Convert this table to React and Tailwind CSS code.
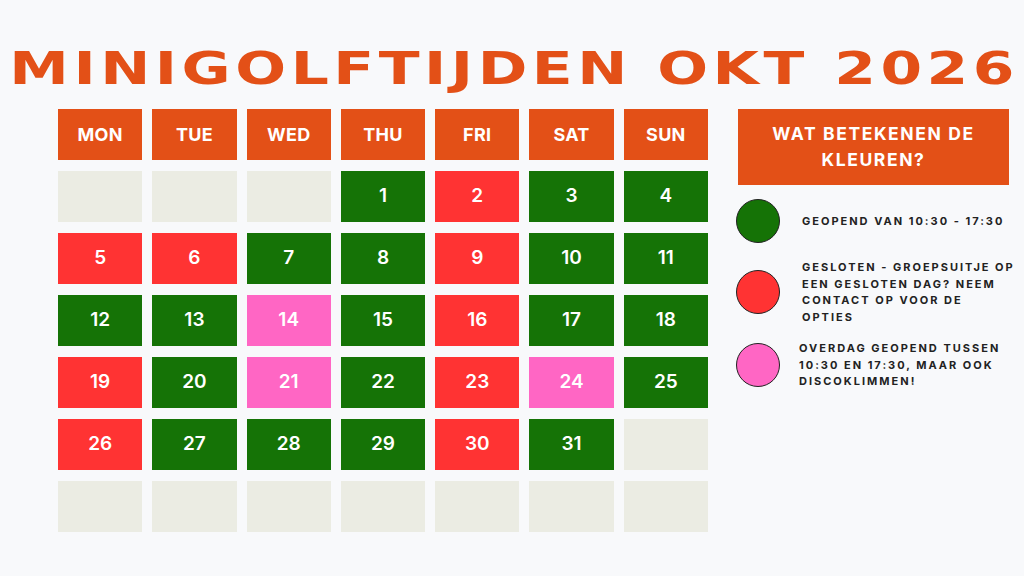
const days = ['MON', 'TUE', 'WED', 'THU', 'FRI', 'SAT', 'SUN']

// g = open, r = closed, p = disco
const cells = [
  null, null, null, [1, 'g'], [2, 'r'], [3, 'g'], [4, 'g'],
  [5, 'r'], [6, 'r'], [7, 'g'], [8, 'g'], [9, 'r'], [10, 'g'], [11, 'g'],
  [12, 'g'], [13, 'g'], [14, 'p'], [15, 'g'], [16, 'r'], [17, 'g'], [18, 'g'],
  [19, 'r'], [20, 'g'], [21, 'p'], [22, 'g'], [23, 'r'], [24, 'p'], [25, 'g'],
  [26, 'r'], [27, 'g'], [28, 'g'], [29, 'g'], [30, 'r'], [31, 'g'], null,
  null, null, null, null, null, null, null,
]

const fill = {
  g: 'bg-[#157306]',
  r: 'bg-[#ff3333]',
  p: 'bg-[#ff66c4]',
}

const legend = [
  { color: 'bg-[#157306]', lines: ['GEOPEND VAN 10:30 - 17:30'], cls: 'ml-[22px]', gap: 'mt-[14px]' },
  {
    color: 'bg-[#ff3333]',
    lines: ['GESLOTEN - GROEPSUITJE OP', 'EEN GESLOTEN DAG? NEEM', 'CONTACT OP VOOR DE', 'OPTIES'],
    cls: 'ml-[22px]',
    gap: 'mt-[16px]',
  },
  {
    color: 'bg-[#ff66c4]',
    lines: ['OVERDAG GEOPEND TUSSEN', '10:30 EN 17:30, MAAR OOK', 'DISCOKLIMMEN!'],
    cls: 'ml-[19px]',
    gap: 'mt-[14px]',
  },
]

export default function App() {
  return (
    <div className="w-[1024px] h-[576px] overflow-hidden bg-[#f8f9fb] font-['Inter',sans-serif]">
      <div className="pt-[41px] flex justify-center">
        <h1 className="inline-block scale-x-[1.33] whitespace-nowrap font-['DejaVu_Sans',sans-serif] font-bold text-[45px] leading-[55px] tracking-[3.4px] text-[#e35017]">
          MINIGOLFTIJDEN OKT 202<span className="tracking-normal">6</span>
        </h1>
      </div>

      <div className="flex mt-[13px]">
        <div className="ml-[58px] w-[650px] grid grid-cols-7 gap-x-[10px] gap-y-[11px]">
          {days.map((d) => (
            <div key={d} className="h-[51px] bg-[#e35017] flex items-center justify-center text-white font-bold text-[18px] tracking-[0.3px]">
              {d}
            </div>
          ))}
          {cells.map((c, i) => (
            <div
              key={i}
              className={`h-[51px] flex items-center justify-center text-white font-semibold text-[19px] ${c ? fill[c[1]] : 'bg-[#ebece3]'}`}
            >
              {c ? c[0] : ''}
            </div>
          ))}
        </div>

        <div className="ml-[30px] w-[271px]">
          <div className="h-[76px] bg-[#e35017] flex items-center justify-center text-center text-white font-bold text-[17.5px] leading-[26px] tracking-[1.6px] px-4">
            WAT BETEKENEN DE KLEUREN?
          </div>

          {legend.map((l) => (
            <div key={l.lines[0]} className={`flex items-center ${l.gap}`}>
              <div className={`-ml-[2px] w-[44px] h-[44px] shrink-0 rounded-full border border-[#222] ${l.color}`} />
              <p className={`${l.cls} whitespace-nowrap text-[11px] leading-[16.7px] font-bold tracking-[2px] text-[#222]`}>
                {l.lines.map((t) => (
                  <span key={t} className="block">{t}</span>
                ))}
              </p>
            </div>
          ))}
        </div>
      </div>
    </div>
  )
}
